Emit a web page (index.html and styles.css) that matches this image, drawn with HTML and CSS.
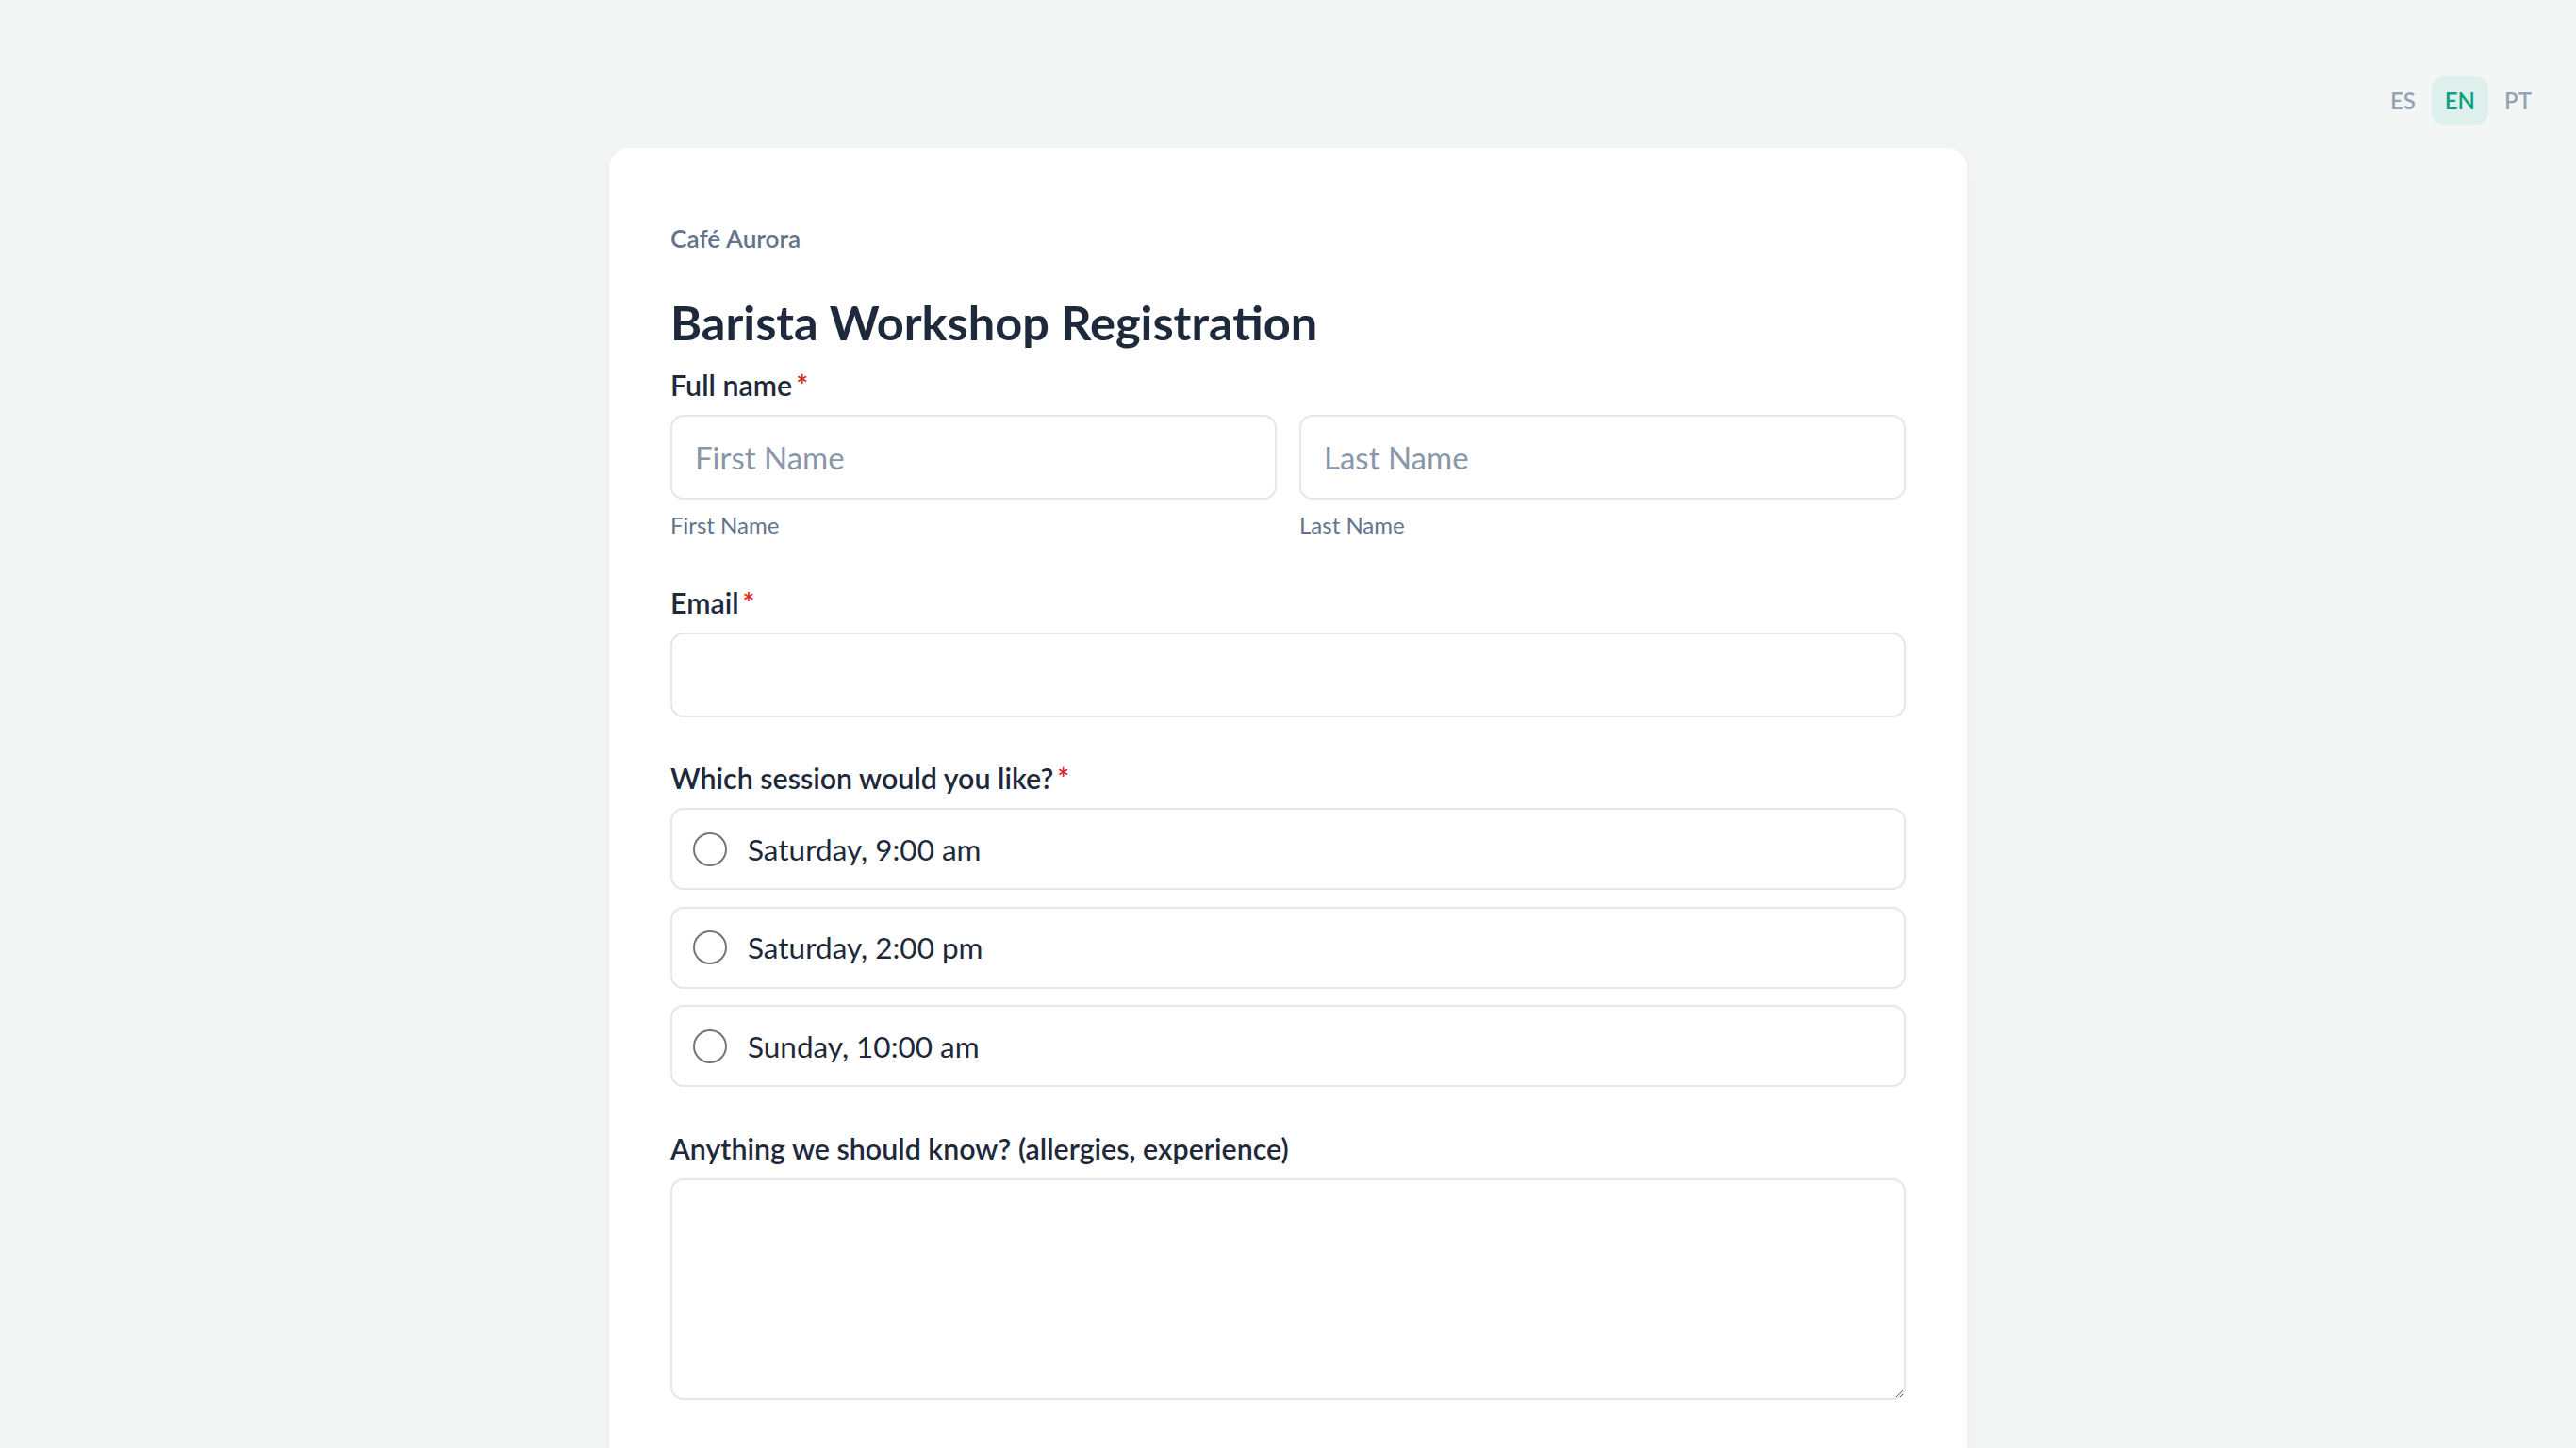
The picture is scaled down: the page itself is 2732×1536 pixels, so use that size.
FILE: index.html
```html
<!DOCTYPE html>
<html lang="en">
<head>
<meta charset="utf-8">
<title>Barista Workshop Registration</title>
<link rel="stylesheet" href="styles.css">
</head>
<body>
<nav class="lang">
  <button class="lang-btn">ES</button>
  <button class="lang-btn active">EN</button>
  <button class="lang-btn">PT</button>
</nav>
<main class="card">
  <p class="brand">Café Aurora</p>
  <h1 class="title">Barista Workshop Registration</h1>

  <div class="field">
    <div class="label">Full name<span class="req">*</span></div>
    <div class="name-grid">
      <div class="name-col">
        <input class="input" type="text" placeholder="First Name">
        <div class="help">First Name</div>
      </div>
      <div class="name-col">
        <input class="input" type="text" placeholder="Last Name">
        <div class="help">Last Name</div>
      </div>
    </div>
  </div>

  <div class="field">
    <div class="label">Email<span class="req">*</span></div>
    <input class="input" type="email">
  </div>

  <div class="field">
    <div class="label">Which session would you like?<span class="req">*</span></div>
    <div class="options">
      <label class="option"><input class="radio" type="radio" name="session"><span class="option-text">Saturday, 9:00 am</span></label>
      <label class="option"><input class="radio" type="radio" name="session"><span class="option-text">Saturday, 2:00 pm</span></label>
      <label class="option"><input class="radio" type="radio" name="session"><span class="option-text">Sunday, 10:00 am</span></label>
    </div>
  </div>

  <div class="field">
    <div class="label">Anything we should know? (allergies, experience)</div>
    <textarea class="textarea"></textarea>
  </div>
</main>
</body>
</html>
```

FILE: styles.css
```css
* { box-sizing: border-box; }

html, body {
  margin: 0;
  padding: 0;
}

body {
  background: #f4f6f5;
  font-family: Lato, "Noto Sans", sans-serif;
  color: #1e293b;
  padding-top: 157px;
  padding-bottom: 120px;
}

.lang {
  position: absolute;
  top: 81px;
  right: 33px;
  display: flex;
  gap: 3px;
}

.lang-btn {
  font-family: Lato, "Noto Sans", sans-serif;
  font-size: 24px;
  font-weight: 600;
  line-height: 36px;
  padding: 8px 14px;
  border: 0;
  border-radius: 14px;
  background: transparent;
  color: #94a3b8;
}

.lang-btn.active {
  background: #def0eb;
  color: #0e9f84;
}

.card {
  width: 1440px;
  margin: 0 auto;
  background: #ffffff;
  border-radius: 21px;
  padding: 77px 65px 80px;
  box-shadow: 0 1px 3px rgba(15, 23, 42, 0.04), 0 4px 20px rgba(15, 23, 42, 0.035);
}

.brand {
  margin: 0;
  font-size: 26.25px;
  line-height: 38px;
  font-weight: 600;
  color: #64748b;
}

.title {
  margin: 40px 0 15px;
  font-size: 50.5px;
  line-height: 59px;
  font-weight: 700;
  color: #1e293b;
}

.field {
  margin-bottom: 42.5px;
}

.label {
  font-size: 30.4px;
  line-height: 44px;
  font-weight: 600;
  color: #1e293b;
  margin-bottom: 10px;
}

.req {
  color: #dc2626;
  margin-left: 4px;
}

.name-grid {
  display: grid;
  grid-template-columns: 1fr 1fr;
  gap: 24px;
}

.input {
  display: block;
  width: 100%;
  height: 90px;
  border: 2px solid #e2e8f0;
  border-radius: 14px;
  padding: 0 24px;
  font-family: Lato, "Noto Sans", sans-serif;
  font-size: 33px;
  color: #1e293b;
  background: #ffffff;
  outline: none;
}

.input::placeholder {
  color: #8a97aa;
}

.help {
  margin-top: 10px;
  font-size: 24px;
  line-height: 34px;
  color: #64748b;
}

.options {
  display: flex;
  flex-direction: column;
  gap: 17.5px;
}

.option {
  display: flex;
  align-items: center;
  height: 87px;
  border: 2px solid #e2e8f0;
  border-radius: 14px;
  padding: 0 22px;
  background: #ffffff;
}

.radio {
  appearance: none;
  -webkit-appearance: none;
  width: 36px;
  height: 36px;
  margin: 0 22px 0 0;
  border: 2px solid #767676;
  border-radius: 50%;
  background: #ffffff;
  flex: none;
}

.option-text {
  font-size: 31.5px;
  color: #1e293b;
}

.textarea {
  display: block;
  width: 100%;
  height: 235px;
  border: 2px solid #e2e8f0;
  border-radius: 14px;
  padding: 20px 24px;
  font-family: Lato, "Noto Sans", sans-serif;
  font-size: 31.5px;
  color: #1e293b;
  background: #ffffff;
  outline: none;
  resize: vertical;
}
```
